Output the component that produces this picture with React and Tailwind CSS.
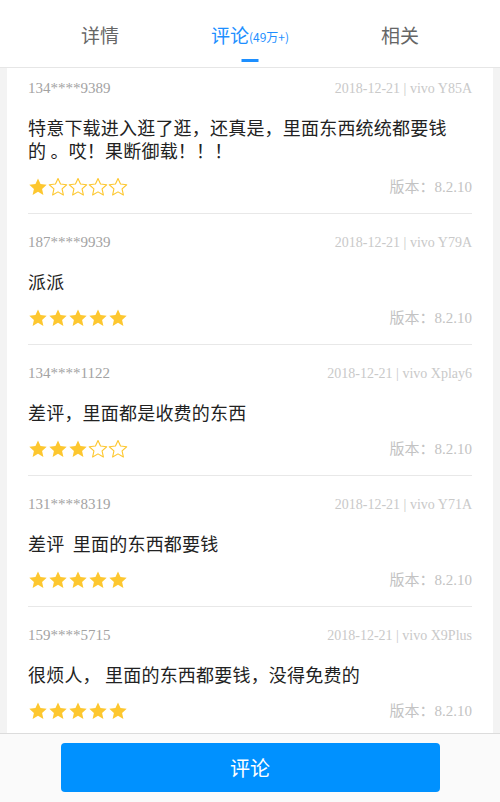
import React from 'react';

const reviews = [
    { user: '134****9389', date: '2018-12-21 | vivo Y85A', lines: ['特意下载进入逛了逛，还真是，里面东西统统都要钱', '的 。哎！果断御载！！！'], stars: 1 },
    { user: '187****9939', date: '2018-12-21 | vivo Y79A', lines: ['派派'], stars: 5 },
    { user: '134****1122', date: '2018-12-21 | vivo Xplay6', lines: ['差评，里面都是收费的东西'], stars: 3 },
    { user: '131****8319', date: '2018-12-21 | vivo Y71A', lines: ['差评  里面的东西都要钱'], stars: 5 },
    { user: '159****5715', date: '2018-12-21 | vivo X9Plus', lines: ['很烦人， 里面的东西都要钱，没得免费的'], stars: 5 },
];

const cjk = { fontFamily: '"Noto Sans CJK SC", sans-serif' };
const thin = { fontFamily: '"Liberation Serif", "Noto Sans CJK SC", serif' };

const Star = ({ filled }) => (
    <svg width="20" height="20" viewBox="0.5 0.5 23 23">
        <path
            d="M12 2.2l2.9 6.4 7.1.8-5.3 4.8 1.5 7-6.2-3.6-6.2 3.6 1.5-7L2 9.4l7.1-.8z"
            fill={filled ? '#fdc72f' : 'none'}
            stroke="#fdc72f"
            strokeWidth={filled ? 0 : 1.3}
            strokeLinejoin="round"
        />
    </svg>
);

const Review = ({ item, first }) => (
    <div className={`${first ? 'pt-[10px]' : 'pt-[18px] border-t border-[#e8e8e8]'} pb-[16px]`}>
        <div className="flex justify-between items-center h-[20px]">
            <span className="text-[15px] text-[#a3a3a3]" style={thin}>{item.user}</span>
            <span className="text-[14px] text-[#c9c9c9]" style={thin}>{item.date}</span>
        </div>
        <div className="mt-[18px] text-[18px] leading-[23px] tracking-[0.2px] text-[#222] whitespace-pre" style={cjk}>
            {item.lines.map((l, i) => (
                <div key={i}>{l}</div>
            ))}
        </div>
        <div className="mt-[15px] flex justify-between items-center h-[20px]">
            <div className="flex">
                {[1, 2, 3, 4, 5].map(n => (
                    <Star key={n} filled={n <= item.stars} />
                ))}
            </div>
            <span className="text-[15px] text-[#c3c3c3]" style={thin}>版本：8.2.10</span>
        </div>
    </div>
);

const App = () => {
    return (
        <div className="h-[802px] flex flex-col bg-[#f3f3f3]" style={cjk}>
            {/* tabs */}
            <div className="h-[68px] bg-white border-b border-[#e6e6e6] grid grid-cols-3 px-[25px]">
                <div className="flex items-center justify-center pt-[4px] text-[19px] text-[#666]">详情</div>
                <div className="relative flex items-center justify-center pt-[4px] text-[19px] text-[#1d8fff]">
                    <span>评论</span>
                    <span className="text-[12px] mt-[3px]">(49万+)</span>
                    <div className="absolute bottom-[5px] left-1/2 -translate-x-1/2 w-[17px] h-[3px] bg-[#1d8fff]"></div>
                </div>
                <div className="flex items-center justify-center pt-[4px] text-[19px] text-[#666]">相关</div>
            </div>

            {/* list */}
            <div className="flex-1 overflow-hidden px-[7px]">
                <div className="bg-white h-full px-[21px]">
                    {reviews.map((item, index) => (
                        <Review key={index} item={item} first={index === 0} />
                    ))}
                </div>
            </div>

            {/* bottom bar */}
            <div className="h-[69px] bg-[#fafafa] border-t border-[#dcdcdc] flex justify-center pt-[9px]">
                <button className="w-[379px] h-[49px] rounded-[4px] bg-[#0091ff] text-white text-[20px]">评论</button>
            </div>
        </div>
    );
};

export default App;
